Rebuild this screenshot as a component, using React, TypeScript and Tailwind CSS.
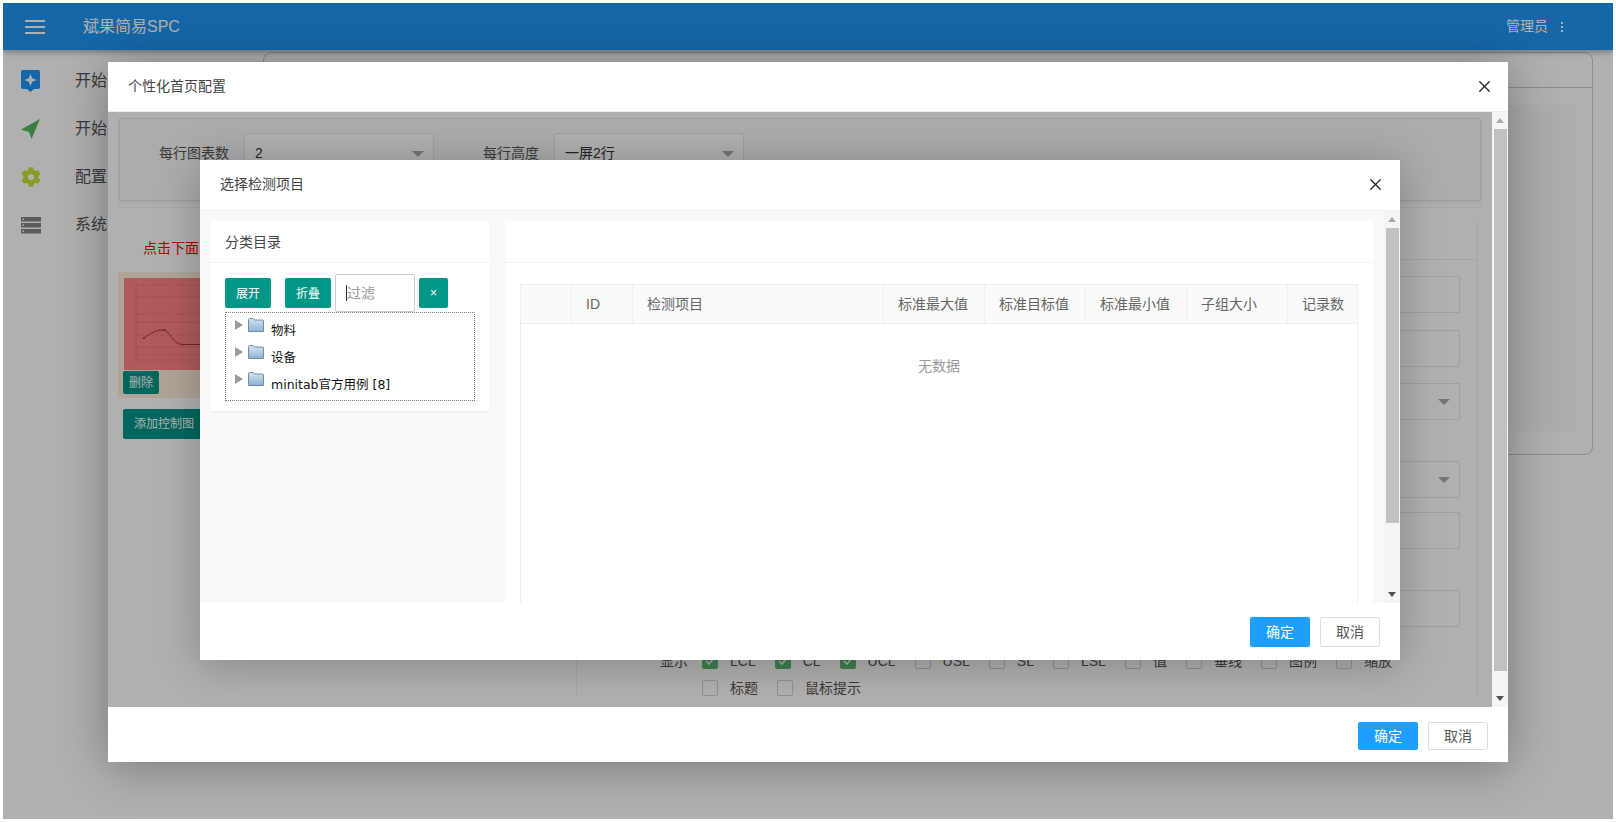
import { X } from 'lucide-react';
import { FaCog } from 'react-icons/fa';

function ShieldStar() {
  return (
    <svg width="19" height="22" viewBox="0 0 19 22">
      <path d="M2 0h15a2 2 0 0 1 2 2v15a2 2 0 0 1-2 2h-4l-3.500 3-3.500-3H2a2 2 0 0 1-2-2V2a2 2 0 0 1 2-2z" fill="#2196f3" />
      <path d="M9.500 4l1.700 4.300 4.300 1.700-4.300 1.700-1.700 4.300-1.700-4.300-4.300-1.700 4.300-1.700z" fill="#fff" />
    </svg>
  );
}

function NavArrow() {
  return (
    <svg width="20" height="20" viewBox="0 0 20 20">
      <path d="M19 0L0 10.500l8 2.500 2.500 7z" fill="#55b85f" />
    </svg>
  );
}

function ServerBars() {
  return (
    <svg width="20" height="17" viewBox="0 0 20 17">
      {[0, 6, 12].map((y) => (
        <g key={y}>
          <rect x="0" y={y} width="20" height="4.500" fill="#858585" />
          <rect x="1.500" y={y + 1.500} width="1.500" height="1.500" fill="#fff" />
        </g>
      ))}
    </svg>
  );
}

const nav = [
  { label: '开始', icon: <ShieldStar /> },
  { label: '开始', icon: <NavArrow /> },
  { label: '配置', icon: <FaCog size={20} className="text-[#cddc39]" /> },
  { label: '系统', icon: <ServerBars /> },
];

const columns = [
  { title: '', w: 'w-[51px]' },
  { title: 'ID', w: 'w-[61px]' },
  { title: '检测项目', w: 'w-[251px]' },
  { title: '标准最大值', w: 'w-[101px]' },
  { title: '标准目标值', w: 'w-[101px]' },
  { title: '标准最小值', w: 'w-[101px]' },
  { title: '子组大小', w: 'w-[101px]' },
  { title: '记录数', w: 'w-[70px]' },
];

const row1 = [
  { t: 'LCL', on: true },
  { t: 'CL', on: true },
  { t: 'UCL', on: true },
  { t: 'USL' },
  { t: 'SL' },
  { t: 'LSL' },
  { t: '值' },
  { t: '垂线' },
  { t: '图例' },
  { t: '缩放' },
];

function Folder() {
  return (
    <svg width="16" height="14" viewBox="0 0 16 14" className="shrink-0">
      <defs>
        <linearGradient id="fold" x1="0" y1="0" x2="0" y2="1">
          <stop offset="0" stopColor="#d5e4f1" />
          <stop offset="1" stopColor="#8fb2d0" />
        </linearGradient>
      </defs>
      <path d="M.5 13.500V1.500a1 1 0 0 1 1-1h3.500l1.500 1.500h8a1 1 0 0 1 1 1v10.500z" fill="url(#fold)" stroke="#6d8ca5" />
    </svg>
  );
}

function TreeRow({ text }: { text: string }) {
  return (
    <div className="h-[27px] flex pl-[9px] text-[12.500px] text-[#111] font-['DejaVu_Sans','Noto_Sans_CJK_SC',sans-serif]">
      <svg width="8" height="10" viewBox="0 0 8 10" className="mt-[7px] mr-[5px] shrink-0">
        <path d="M0 0l8 5-8 5z" fill="#9a9a9a" />
      </svg>
      <div className="mt-[5px] mr-[7px]"><Folder /></div>
      <span className="mt-[8px] leading-[20px] whitespace-nowrap">{text}</span>
    </div>
  );
}

function Scrollbar({ thumbH, up = '#a8a8a8', tone = 'bg-[#f1f1f1]' }: { thumbH: number; up?: string; tone?: string }) {
  return (
    <div className={'w-[16px] shrink-0 h-full flex flex-col items-center ' + tone}>
      <svg width="8" height="17" viewBox="0 0 8 17" className="shrink-0">
        <path d="M0 11l4-5 4 5z" fill={up} />
      </svg>
      <div className="w-[13px] bg-[#c1c1c1] shrink-0" style={{ height: thumbH }} />
      <div className="flex-1" />
      <svg width="8" height="17" viewBox="0 0 8 17" className="shrink-0">
        <path d="M0 6h8l-4 5z" fill="#505050" />
      </svg>
    </div>
  );
}

function Field({ arrow, className }: { arrow?: boolean; className: string }) {
  return (
    <div className={'h-[37px] border border-[#e6e6e6] rounded-[2px] flex items-center justify-end pr-[9px] ' + className}>
      {arrow && <span className="w-0 h-0 border-x-[6px] border-x-transparent border-t-[6px] border-t-[#aaa]" />}
    </div>
  );
}

function Check({ t, on }: { t: string; on?: boolean }) {
  return (
    <div className="flex items-center gap-[12px]">
      <span className={'w-[16px] h-[16px] rounded-[2px] border flex items-center justify-center ' + (on ? 'bg-[#5fb878] border-[#5fb878]' : 'border-[#d2d2d2]')}>
        {on && (
          <svg width="10" height="8" viewBox="0 0 10 8"><path d="M1 4l3 3 5-6" fill="none" stroke="#fff" strokeWidth="1.500" /></svg>
        )}
      </span>
      <span>{t}</span>
    </div>
  );
}

function ModalButtons() {
  return (
    <>
      <button className="w-[60px] h-full rounded-[2px] bg-[#1e9fff] text-white text-[14px]">确定</button>
      <button className="w-[60px] h-full rounded-[2px] bg-white border border-[#dedede] text-[#555] text-[14px] ml-[10px]">取消</button>
    </>
  );
}

function Chart() {
  return (
    <svg width="76" height="92" viewBox="0 0 76 92" className="block bg-[#ff8484]">
      <path d="M12 6v76M9 19h67M9 44h67M9 69h67M9 82h67" fill="none" stroke="#e26a6a" strokeWidth=".5" />
      <path d="M12 7h64M12 36h64M12 57h64M12 77h64" fill="none" stroke="#cc5c5c" strokeWidth=".5" strokeDasharray="3 2" />
      <path d="M20 60C28 54 33 52 39 52c7 0 9 14 19 14.500h18" fill="none" stroke="#a03030" strokeWidth=".9" />
      <circle cx="20" cy="60" r="1" fill="#a03030" />
      <circle cx="40" cy="52" r="1" fill="#a03030" />
      <circle cx="58" cy="66.500" r="1" fill="#a03030" />
    </svg>
  );
}

export default function App() {
  return (
    <div className="w-[1616px] h-[822px] bg-white p-[3px] font-['Liberation_Sans','Noto_Sans_CJK_SC',sans-serif] overflow-hidden">
      <div className="relative w-[1610px] h-[816px] overflow-hidden bg-white">
        {/* page under the dialogs */}
        <header className="h-[47px] bg-[#2196f3] flex items-center text-white shadow-[0_2px_6px_rgba(0,0,0,0.35)] relative">
          <div className="ml-[22px] w-[20px] flex flex-col gap-[4px]">
            <span className="h-[2px] bg-white" />
            <span className="h-[2px] bg-white" />
            <span className="h-[2px] bg-white" />
          </div>
          <span className="ml-[38px] text-[16px]">斌果简易SPC</span>
          <span className="ml-auto text-[14px]">管理员</span>
          <div className="ml-[13px] mr-[50px] flex flex-col gap-[2px]">
            <span className="w-[2px] h-[2px] bg-white" />
            <span className="w-[2px] h-[2px] bg-white" />
            <span className="w-[2px] h-[2px] bg-white" />
          </div>
        </header>
        <div className="flex">
          <nav className="w-[260px] pt-[7px] shrink-0">
            {nav.map((n, i) => (
              <div key={i} className="h-[48px] flex items-center text-[16px] text-[#555]">
                <div className="w-[56px] pl-[18px] flex">{n.icon}</div>
                <span className="ml-[16px] whitespace-nowrap">{n.label}</span>
              </div>
            ))}
          </nav>
          <main className="mt-[2px] w-[1330px] h-[403px] border border-[#ccc] rounded-[8px]">
            <div className="h-[35px] border-b border-[#ccc]" />
            <div className="mt-[17px] ml-[1244px] mr-[16px] h-[326px] bg-[#f9f9f9]" />
          </main>
        </div>

        <div className="absolute inset-0 bg-black/[0.31]" />

        {/* outer dialog */}
        <div className="absolute left-[105px] top-[59px] w-[1400px] h-[700px] bg-white flex flex-col shadow-[0_4px_45px_rgba(0,0,0,0.33)]">
          <div className="h-[50px] shrink-0 border-b border-[#eee] flex items-center pl-[20px] pr-[14px] pb-[1px] text-[14px] text-[#444]">
            <span>个性化首页配置</span>
            <X size={19} strokeWidth={1.6} className="ml-auto text-[#222]" />
          </div>

          <div className="h-[595px] shrink-0 flex">
            <div className="relative flex-1 overflow-hidden bg-white">
              <div className="px-[11px] pt-[6px] text-[14px] text-[#555]">
                <div className="h-[83px] border border-[#e6e6e6] rounded-[2px] bg-[#f9f9f9] flex pt-[14px] shadow-[0_1px_3px_rgba(0,0,0,0.1)]">
                  <span className="w-[109px] text-right leading-[41px]">每行图表数</span>
                  <div className="ml-[15px] w-[190px] h-[37px] border border-[#e6e6e6] rounded-[2px] flex items-center justify-between pl-[10px] pr-[9px] pt-[4px] text-[#333] bg-white">
                    2<span className="w-0 h-0 border-x-[6px] border-x-transparent border-t-[6px] border-t-[#aaa]" />
                  </div>
                  <span className="ml-[49px] leading-[41px]">每行高度</span>
                  <div className="ml-[15px] w-[190px] h-[37px] border border-[#e6e6e6] rounded-[2px] flex items-center justify-between pl-[10px] pr-[9px] pt-[4px] text-[#333] bg-white">
                    一屏2行<span className="w-0 h-0 border-x-[6px] border-x-transparent border-t-[6px] border-t-[#aaa]" />
                  </div>
                </div>
                <div className="mt-[6px] h-px bg-[#eee]" />

                <div className="flex mt-[12px] mr-[3px]">
                  <div className="w-[457px] shrink-0">
                    <p className="mt-[18px] ml-[24px] text-[#ff0000] whitespace-nowrap leading-[20px]">点击下面</p>
                    <div className="mt-[14px] -ml-[1px] w-[300px] h-[126px] bg-[#ffeedd] pt-[6px] pl-[6px]">
                      <Chart />
                      <button className="mt-[1px] -ml-[1px] block w-[36px] h-[23px] rounded-[2px] bg-[#009688] text-white text-[12px]">删除</button>
                    </div>
                    <button className="mt-[11px] ml-[4px] block w-[82px] h-[30px] rounded-[2px] bg-[#009688] text-white text-[12px]">添加控制图</button>
                  </div>
                  <div className="flex-1 border-l border-r border-[#f0f0f0] pr-[17px]">
                    <div className="h-[40px] border-b border-[#f0f0f0] -mr-[17px]" />
                    <Field className="mt-[16px]" />
                    <Field className="mt-[17px]" />
                    <Field className="mt-[16px]" arrow />
                    <Field className="mt-[41px]" arrow />
                    <Field className="mt-[14px]" />
                    <Field className="mt-[41px]" />
                    <div className="mt-[26px] pl-[83px] flex items-center gap-[14px] h-[16px]">
                      <span>显示</span>
                      <div className="flex gap-[19px]">
                        {row1.map((c) => (<Check key={c.t} t={c.t} on={c.on} />))}
                      </div>
                    </div>
                    <div className="mt-[11px] pl-[125px] flex gap-[19px] h-[16px] items-center">
                      <Check t="标题" />
                      <Check t="鼠标提示" />
                    </div>
                  </div>
                </div>
              </div>

              <div className="absolute inset-0 bg-black/[0.31]" />

              {/* inner dialog */}
              <div className="absolute left-[92px] top-[48px] w-[1200px] h-[500px] bg-white flex flex-col shadow-[0_4px_40px_rgba(0,0,0,0.25)]">
                <div className="h-[51px] shrink-0 border-b border-[#eee] flex items-center pl-[20px] pr-[15px] pb-[2px] text-[14px] text-[#444]">
                  <span>选择检测项目</span>
                  <X size={19} strokeWidth={1.6} className="ml-auto text-[#222]" />
                </div>
                <div className="h-[392px] shrink-0 flex bg-[#f9f9f9] overflow-hidden">
                  <div className="flex-1 flex pl-[10px] pt-[10px] gap-[15px]">
                    <section className="w-[280px] h-[190px] bg-white rounded-[2px] shadow-[0_1px_2px_rgba(0,0,0,0.05)]">
                      <div className="h-[42px] border-b border-[#f2f2f2] flex items-center pl-[15px] pt-[1px] text-[14px] text-[#444]">分类目录</div>
                      <div className="flex items-start pl-[15px] pt-[11px] text-[12px]">
                        <button className="mt-[4px] w-[46px] h-[30px] pt-[1px] rounded-[2px] bg-[#009688] text-white">展开</button>
                        <button className="mt-[4px] ml-[14px] w-[46px] h-[30px] pt-[1px] rounded-[2px] bg-[#009688] text-white">折叠</button>
                        <div className="ml-[4px] w-[80px] h-[38px] border border-[#ccc] rounded-[2px] flex items-center pl-[10px] text-[14px] text-[#999]">
                          <span className="w-px h-[16px] bg-[#333]" />过滤
                        </div>
                        <button className="mt-[4px] ml-[4px] w-[29px] h-[30px] rounded-[2px] bg-[#009688] text-white">×</button>
                      </div>
                      <div className="ml-[15px] w-[250px] h-[89px] border border-dotted border-[#777]">
                        <TreeRow text="物料" />
                        <TreeRow text="设备" />
                        <TreeRow text="minitab官方用例 [8]" />
                      </div>
                    </section>
                    <section className="w-[868px] h-[400px] bg-white rounded-[2px] shrink-0">
                      <div className="h-[42px] border-b border-[#f2f2f2]" />
                      <div className="ml-[15px] mt-[21px] w-[838px] h-[360px] border border-[#eee] text-[14px] text-[#666]">
                        <div className="h-[39px] flex bg-[#fafafa] border-b border-[#eee]">
                          {columns.map((c) => (
                            <div key={c.title} className={c.w + ' shrink-0 border-r border-[#eee] last:border-r-0 pl-[14px] flex items-center whitespace-nowrap'}>{c.title}</div>
                          ))}
                        </div>
                        <div className="text-center mt-[32px] text-[#999] leading-[20px]">无数据</div>
                      </div>
                    </section>
                  </div>
                  <Scrollbar thumbH={295} tone="bg-[#f4f4f4]" />
                </div>
                <div className="h-[57px] shrink-0 flex justify-end pr-[20px] pt-[14px] pb-[13px]">
                  <ModalButtons />
                </div>
              </div>
            </div>
            <Scrollbar thumbH={542} up="#a8a8a8" tone="bg-[#f5f5f5]" />
          </div>

          <div className="h-[55px] shrink-0 flex justify-end pr-[20px] pt-[15px] pb-[12px]">
            <ModalButtons />
          </div>
        </div>
      </div>
    </div>
  );
}
